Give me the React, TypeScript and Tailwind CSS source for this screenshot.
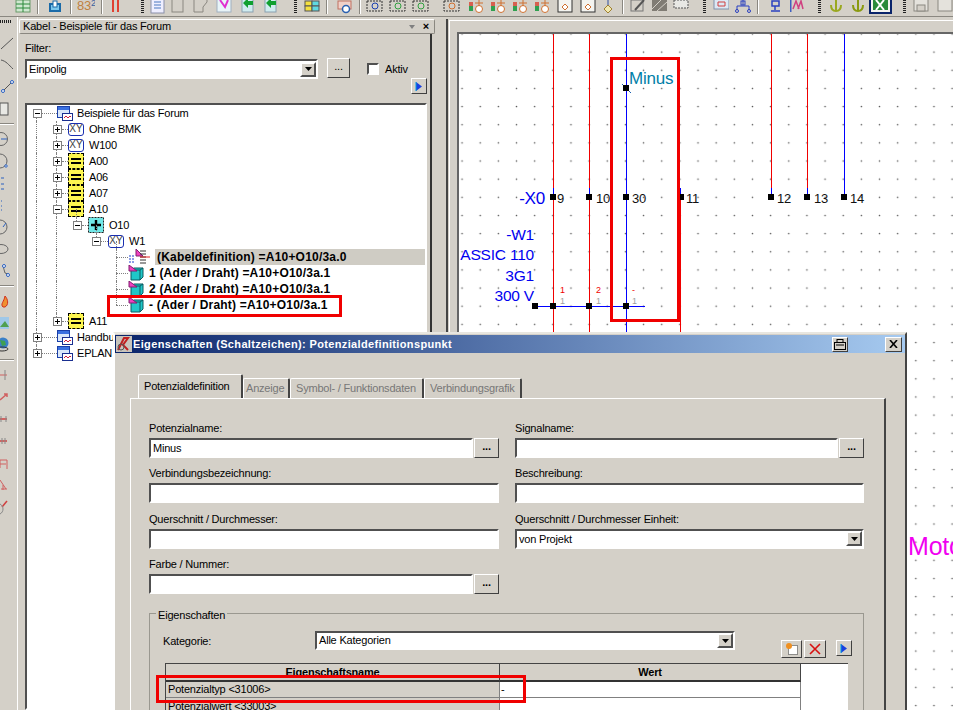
import type { ReactNode } from 'react'

const FONT = "font-['Liberation_Sans',Arial,sans-serif]"
const sunken = 'border-2 border-t-[#505050] border-l-[#505050] border-r-white border-b-white bg-white'
const raised = 'border border-t-white border-l-white border-r-[#404040] border-b-[#404040] bg-[#d4d0c8]'

// ---------- top toolbar ----------
function Tb({ w = 16, className = '', children }: { w?: number; className?: string; children: ReactNode }) {
  return (
    <svg width={w} height={15} viewBox={`0 0 ${w} 15`} className={`shrink-0 ${className}`}>
      {children}
    </svg>
  )
}

const Doc = () => <><rect x="1" y="-3" width="13" height="16" fill="#eef" stroke="#8a8fa8" /><path d="M4 2h7M4 5h7M4 8h7" stroke="#4a78c0" /></>
const Blank = () => <rect x="1" y="-3" width="11" height="15" fill="#d4d0c8" stroke="#8a8780" />
const Tag = () => <path d="M2-2v14h9V7l4-5V-2" fill="#d4d0c8" stroke="#8a8780" />
const Mag = () => <><rect x="1" y="-2" width="14" height="14" fill="#e8f4f8" stroke="#a0b0c0" /><path d="M4 0l5 7 3-7" fill="none" stroke="#e030d0" strokeWidth="2" /></>
const GreenDoc = () => <><rect x="1" y="-2" width="11" height="14" fill="#d0ecf0" stroke="#8aa0b0" /><path d="M2 3l5-5v3h5v4H7v3z" fill="#10a030" /></>
const Dash = ({ c = '#1a3fb0' }: { c?: string }) => <><rect x="1" y="1" width="15" height="10" fill="none" stroke="#333" strokeDasharray="2 1" /><circle cx="9" cy="6" r="3" fill="none" stroke={c} /></>
const Sw = () => <><rect x="1" y="2" width="4" height="9" fill="#d86050" /><rect x="1" y="6" width="4" height="5" fill="#30a050" /><circle cx="11" cy="9" r="3.5" fill="#fff" stroke="#d07030" /><path d="M11 0v6M7 3h8" stroke="#d07030" /></>
const Box = () => <><rect x="1" y="-2" width="14" height="14" fill="#f4f4f0" stroke="#333" /><path d="M8 4l3 3-3 3-3-3z" fill="#fff" stroke="#d07030" /></>
const Hatch = () => <><rect x="1" y="0" width="15" height="11" fill="#807c74" /><path d="M1 9l9-9M6 11l10-9" stroke="#d4d0c8" /></>
const Anchor = ({ c = '#9aa820' }: { c?: string }) => <path d="M8 0v10M3 5c0 4 2 6 5 6s5-2 5-6" fill="none" stroke={c} strokeWidth="2" />

function Sep({ className = '' }: { className?: string }) {
  return <div className={`h-[14px] w-[2px] shrink-0 border-l border-l-[#8a8780] border-r border-r-white ${className}`} />
}
function Grip({ className = '' }: { className?: string }) {
  return <div className={`h-[14px] w-[3px] shrink-0 bg-[repeating-linear-gradient(#222_0,#222_1px,#d4d0c8_1px,#d4d0c8_2px)] ${className}`} />
}

function TopToolbar() {
  return (
    <div className="flex h-[17px] shrink-0 items-start border-b border-b-[#8a8780] pl-[15px] overflow-hidden">
      <Tb><rect x="1" y="0" width="14" height="12" fill="#cfe8d0" stroke="#6a9a6a" /><path d="M1 4h14M1 8h14M8 0v12" stroke="#2a8a3a" /></Tb>
      <Sep className="ml-[6px]" />
      <Tb className="ml-[9px]" w={14}><path d="M2 4h10v7H2z" fill="#7ac8ee" stroke="#1a6aa8" strokeWidth="2" /><rect x="5" y="1" width="4" height="6" fill="#fff" stroke="#1a6aa8" /></Tb>
      <Sep className="ml-[8px]" />
      <div className="ml-[5px] h-[15px] w-[18px] overflow-hidden text-[13px] leading-[11px] text-[#c08040]">83<sup className="text-[#3a60a0] text-[9px]">2</sup></div>
      <Sep className="ml-[6px]" />
      <Tb className="ml-[8px]" w={10}><path d="M2 0v12M7 0v12" stroke="#e04030" strokeWidth="2" /></Tb>
      <Grip className="ml-[20px]" />
      <Tb className="ml-[6px]"><Doc /></Tb>
      <Tb className="ml-[5px]" w={14}><Blank /></Tb>
      <Tb className="ml-[7px]"><Tag /></Tb>
      <Tb className="ml-[8px]"><Mag /></Tb>
      <Tb className="ml-[9px]" w={14}><GreenDoc /></Tb>
      <Tb className="ml-[9px]" w={14}><GreenDoc /></Tb>
      <Grip className="ml-[16px]" />
      <Tb className="ml-[7px]"><rect x="1" y="1" width="7" height="5" fill="#f4e040" stroke="#555" /><rect x="8" y="1" width="7" height="5" fill="#60d8e0" stroke="#555" /><rect x="1" y="6" width="7" height="5" fill="#f4e040" stroke="#555" /><rect x="8" y="6" width="7" height="5" fill="#60d8e0" stroke="#555" /></Tb>
      <Sep className="ml-[6px]" />
      <Tb className="ml-[9px]"><rect x="1" y="1" width="13" height="8" fill="#f0d0c8" stroke="#c07060" /><circle cx="9" cy="9" r="3.5" fill="#fff" stroke="#2a60b0" strokeWidth="1.5" /></Tb>
      <Sep className="ml-[6px]" />
      <Tb className="ml-[5px]" w={17}><Dash /></Tb>
      <Tb className="ml-[6px]" w={17}><Dash c="#30a040" /></Tb>
      <Tb className="ml-[6px]" w={17}><Dash c="#30a040" /></Tb>
      <Tb className="ml-[14px]" w={17}><Dash c="#d07030" /></Tb>
      <Tb className="ml-[8px]"><Sw /></Tb>
      <Tb className="ml-[6px]"><Sw /></Tb>
      <Tb className="ml-[6px]"><Sw /></Tb>
      <Tb className="ml-[6px]"><Sw /></Tb>
      <Tb className="ml-[7px]"><Box /></Tb>
      <Tb className="ml-[7px]"><Box /></Tb>
      <Tb className="ml-[6px]" w={12}><path d="M6 0v5" stroke="#3050a0" /><path d="M6 5l4 4-4 4-4-4z" fill="#f0e8b0" stroke="#a08030" /></Tb>
      <Sep className="ml-[8px]" />
      <Tb className="ml-[6px]"><rect x="1" y="0" width="12" height="11" fill="#d4d0c8" stroke="#777" /><path d="M5 10l9-10" stroke="#555" strokeWidth="2" /></Tb>
      <Tb className="ml-[5px]"><Hatch /></Tb>
      <Tb className="ml-[6px]"><rect x="1" y="0" width="14" height="8" fill="#e8e8e4" stroke="#555" strokeDasharray="2 1" /></Tb>
      <Grip className="ml-[14px]" />
      <Tb className="ml-[7px]"><rect x="1" y="-2" width="15" height="11" fill="#dce8f4" stroke="#8090a8" /><path d="M5 2h7v4H5z" fill="none" stroke="#d04040" /></Tb>
      <Tb className="ml-[6px]"><path d="M8 0v5M2 6h12M2 6v4M14 6v4" fill="none" stroke="#2a40c0" /><rect x="6" y="1" width="4" height="4" fill="none" stroke="#2a40c0" /><circle cx="2" cy="11" r="1.5" fill="none" stroke="#2a40c0" /><circle cx="14" cy="11" r="1.5" fill="none" stroke="#2a40c0" /></Tb>
      <Sep className="ml-[6px]" />
      <Tb className="ml-[10px]" w={12}><path d="M3 1h7v5H3zM6 6v4M2 11h9" fill="none" stroke="#2a40c0" strokeWidth="1.5" /></Tb>
      <Tb className="ml-[8px]"><rect x="1" y="0" width="1.5" height="12" fill="#4060c0" /><path d="M4 9l3-8 3 8M9 9l3-8 2 8" fill="none" stroke="#d04080" strokeWidth="1.5" /></Tb>
      <Grip className="ml-[13px]" />
      <Tb className="ml-[7px]"><Anchor /></Tb>
      <Tb className="ml-[6px]"><Anchor c="#8a9a10" /></Tb>
      <div className="ml-[3px] h-[14px] w-[23px] shrink-0 border-2 border-[#0a246a] border-t-0 bg-[#f4f4f0] flex justify-center overflow-hidden">
        <svg width="15" height="11" viewBox="0 0 15 11"><rect x="0" y="0" width="15" height="10" fill="#2a8a3a" /><path d="M3 0l8 10M11 0l-8 10" stroke="#fff" strokeWidth="2" /></svg>
      </div>
      <Grip className="ml-[11px]" />
      <Tb className="ml-[7px]"><rect x="1" y="-2" width="14" height="13" fill="#e4e2dc" stroke="#8a8780" /><rect x="4" y="5" width="8" height="6" fill="#d4d0c8" stroke="#8a8780" /></Tb>
      <Tb className="ml-[8px]"><rect x="1" y="-2" width="14" height="13" fill="#e4e2dc" stroke="#8a8780" /></Tb>
    </div>
  )
}

// ---------- left toolbar ----------
const leftIcons: ReactNode[] = [
  <path d="M1 14L13 3" stroke="#555" />,
  <path d="M1 3c5 1 8 5 12 9" fill="none" stroke="#555" />,
  <><path d="M2 13l10-10" stroke="#555" /><circle cx="12" cy="3" r="1.5" fill="#fff" stroke="#2a60c0" /><circle cx="3" cy="12" r="1.5" fill="#fff" stroke="#2a60c0" /></>,
  <rect x="0" y="2" width="8" height="12" fill="#e8e8e4" stroke="#555" />,
  null,
  <><circle cx="1" cy="8" r="6.5" fill="none" stroke="#666" /><path d="M1 8h6" stroke="#2a60c0" /></>,
  <><circle cx="0" cy="8" r="7" fill="none" stroke="#666" /><circle cx="6" cy="13" r="1.2" fill="#fff" stroke="#2a60c0" /></>,
  <path d="M1 3h3M1 9h3M1 14h3" stroke="#2a60c0" />,
  <path d="M1 4h2M1 9h2M1 13h2" stroke="#2a60c0" strokeDasharray="1 1" />,
  <><circle cx="0" cy="8" r="7" fill="none" stroke="#666" /><path d="M3 8l3-4" stroke="#2a60c0" /></>,
  <ellipse cx="1" cy="8" rx="7" ry="4.5" fill="none" stroke="#666" />,
  <><path d="M3 3l2 7 3 1" fill="none" stroke="#666" /><circle cx="4" cy="3" r="1.5" fill="#fff" stroke="#2a60c0" /><circle cx="8" cy="12" r="1.5" fill="#fff" stroke="#2a60c0" /></>,
  null,
  <path d="M3 14c-3-3 1-5 2-11 3 3 4 9 0 11z" fill="#f09030" stroke="#d03020" />,
  <><rect x="0" y="2" width="9" height="12" fill="#a0c8e8" /><path d="M0 12l5-6 4 6z" fill="#50a050" /></>,
  <><circle cx="3" cy="6" r="5.5" fill="#3a80c8" /><path d="M0 3l5 1 1 4-4 1z" fill="#40a050" /><ellipse cx="2" cy="12" rx="6" ry="2" fill="none" stroke="#333" /></>,
  null,
  <><path d="M0 8h7" stroke="#d06060" /><path d="M5 3v10" stroke="#888" /></>,
  <path d="M0 11l7-6M4 5h3v3" fill="none" stroke="#d06060" strokeWidth="1.5" />,
  <><path d="M0 8h7" stroke="#d04040" strokeWidth="1.5" /><path d="M1 5v6M6 5v6" stroke="#888" /></>,
  <><path d="M0 8h7" stroke="#d04040" strokeWidth="1.5" /><path d="M2 5v6M5 5v6" stroke="#888" /></>,
  <path d="M0 5h7v9M0 5v8M0 9h6" fill="none" stroke="#d06060" />,
  <path d="M0 3l6 9M1 12h6M3 8v5" fill="none" stroke="#d06060" />,
  <><path d="M7 2L2 8" stroke="#d04040" strokeWidth="1.5" /><path d="M0 5c4 2 4 8 0 10" fill="none" stroke="#888" /></>,
]

function LeftToolbar() {
  return (
    <div className="flex w-[18px] shrink-0 flex-col overflow-hidden pt-[3px] border-r border-r-white">
      <div className="h-[3px] w-[11px] shrink-0 bg-[repeating-linear-gradient(90deg,#222_0,#222_1px,#d4d0c8_1px,#d4d0c8_2px)]" />
      <div className="mt-[9px] flex flex-col">
        {leftIcons.map((icon, i) =>
          icon === null ? (
            <div key={i} className="my-[3px] h-[2px] w-[14px] border-t border-t-[#8a8780] border-b border-b-white" />
          ) : (
            <svg key={i} width="15" height="22" viewBox="0 -3 15 22" className="shrink-0">{icon}</svg>
          ),
        )}
      </div>
    </div>
  )
}

// ---------- tree ----------
const WinIcon = () => (
  <svg width="16" height="16" viewBox="0 0 16 16" className="shrink-0">
    <rect x="0.5" y="1.5" width="12" height="11" fill="#dbe8fa" stroke="#1a3fa8" />
    <rect x="1" y="2" width="11" height="3" fill="#3a70e0" />
    <rect x="5.5" y="8.5" width="10" height="7" fill="#fff" stroke="#1a2f90" />
    <path d="M7 13l2-2 2 2 2-2 1 1" fill="none" stroke="#d02040" />
  </svg>
)
const XYIcon = () => (
  <div className="flex h-[13px] w-[16px] shrink-0 items-center justify-center rounded-[3px] border border-[#1a2fb0] text-[10px] leading-none tracking-normal text-[#444]">XY</div>
)
const EqIcon = () => (
  <div className="flex h-[16px] w-[16px] shrink-0 flex-col items-center justify-center gap-[2px] border border-dashed border-black bg-[#fdf650]">
    <div className="h-[2px] w-[10px] bg-black" />
    <div className="h-[2px] w-[10px] bg-black" />
  </div>
)
const PlusIcon = () => (
  <svg width="16" height="16" viewBox="0 0 16 16" className="shrink-0">
    <rect x="0.5" y="0.5" width="15" height="15" fill="#70e8e8" stroke="#222" strokeDasharray="2 1" />
    <path d="M8 3v10M3 8h10" stroke="#000" strokeWidth="2.4" />
  </svg>
)
const WireIcon = () => (
  <svg width="16" height="16" viewBox="0 0 16 16" className="shrink-0">
    <path d="M3 5l3-2h9v9l-3 3H3z" fill="#20c8c8" stroke="#0a5a60" />
    <path d="M3 5h9v10M12 5l3-2" fill="none" stroke="#0a5a60" />
    <path d="M1 0l8 6H1z" fill="#f040c0" stroke="#802070" />
  </svg>
)
const CableIcon = () => (
  <svg width="22" height="16" viewBox="0 0 22 16" className="shrink-0">
    <path d="M1 7h6M1 10h6M1 13h5" stroke="#1a3fd0" strokeDasharray="2 1" />
    <path d="M8 0l7 7H8z" fill="#f040c0" stroke="#802070" />
    <path d="M13 1v14M15 1v14M17 1v14" stroke="#333" strokeDasharray="2 1" />
    <path d="M12 8h10" stroke="#e02020" />
  </svg>
)

const guideX = { a: 'left-[7px]', b: 'left-[27px]', c: 'left-[47px]', d: 'left-[67px]', e: 'left-[87px]' }
const guidePart = { f: 'top-0 bottom-0', t: 'top-0 h-[8px]', l: 'top-[8px] bottom-0' }
type Guide = [keyof typeof guideX, keyof typeof guidePart]

type Row = {
  pad: string
  box?: '+' | '-'
  conn: string
  icon: ReactNode
  gap: string
  text: string
  bold?: boolean
  hl?: boolean
  guides: Guide[]
}

const L0 = { pad: 'pl-[4px]', conn: 'w-[15px]', gap: 'ml-[4px]' }
const L1 = { pad: 'pl-[24px]', conn: 'w-[6px]', gap: 'ml-[5px]' }
const L2 = { pad: 'pl-[44px]', conn: 'w-[6px]', gap: 'ml-[5px]' }
const L3 = { pad: 'pl-[63px]', conn: 'w-[7px]', gap: 'ml-[5px]' }
const L4 = { pad: 'pl-[87px]', conn: 'w-[12px]', gap: 'ml-[5px]' }

const rows: Row[] = [
  { ...L0, box: '-', icon: <WinIcon />, text: 'Beispiele für das Forum', guides: [['a', 'l']] },
  { ...L1, box: '+', icon: <XYIcon />, text: 'Ohne BMK', guides: [['a', 'f'], ['b', 'f']] },
  { ...L1, box: '+', icon: <XYIcon />, text: 'W100', guides: [['a', 'f'], ['b', 'f']] },
  { ...L1, box: '+', icon: <EqIcon />, text: 'A00', guides: [['a', 'f'], ['b', 'f']] },
  { ...L1, box: '+', icon: <EqIcon />, text: 'A06', guides: [['a', 'f'], ['b', 'f']] },
  { ...L1, box: '+', icon: <EqIcon />, text: 'A07', guides: [['a', 'f'], ['b', 'f']] },
  { ...L1, box: '-', icon: <EqIcon />, text: 'A10', guides: [['a', 'f'], ['b', 'f'], ['c', 'l']] },
  { ...L2, box: '-', icon: <PlusIcon />, text: 'O10', guides: [['a', 'f'], ['b', 'f'], ['c', 't'], ['d', 'l']] },
  { ...L3, box: '-', icon: <XYIcon />, text: 'W1', guides: [['a', 'f'], ['b', 'f'], ['d', 't'], ['e', 'l']] },
  { ...L4, icon: <CableIcon />, text: '(Kabeldefinition) =A10+O10/3a.0', bold: true, hl: true, guides: [['a', 'f'], ['b', 'f'], ['e', 'f']] },
  { ...L4, icon: <WireIcon />, text: '1 (Ader / Draht) =A10+O10/3a.1', bold: true, guides: [['a', 'f'], ['b', 'f'], ['e', 'f']] },
  { ...L4, icon: <WireIcon />, text: '2 (Ader / Draht) =A10+O10/3a.1', bold: true, guides: [['a', 'f'], ['b', 'f'], ['e', 'f']] },
  { ...L4, icon: <WireIcon />, text: '- (Ader / Draht) =A10+O10/3a.1', bold: true, guides: [['a', 'f'], ['b', 'f'], ['e', 't']] },
  { ...L1, box: '+', icon: <EqIcon />, text: 'A11', guides: [['a', 'f'], ['b', 't']] },
  { ...L0, box: '+', icon: <WinIcon />, text: 'Handbuch', guides: [['a', 'f']] },
  { ...L0, box: '+', icon: <WinIcon />, text: 'EPLAN', guides: [['a', 't']] },
]

function TreeRow({ row }: { row: Row }) {
  return (
    <div className={`relative flex h-[16px] items-center whitespace-nowrap ${row.pad}`}>
      {row.guides.map(([x, part]) => (
        <span key={x + part} className={`absolute w-0 border-l border-dotted border-l-[#808080] ${guideX[x]} ${guidePart[part]}`} />
      ))}
      {row.box && (
        <span className="relative flex h-[9px] w-[9px] shrink-0 items-center justify-center border border-[#808080] bg-white">
          <span className="h-px w-[5px] bg-black" />
          {row.box === '+' && <span className="absolute h-[5px] w-px bg-black" />}
        </span>
      )}
      <span className={`h-0 shrink-0 border-t border-dotted border-t-[#808080] ${row.conn}`} />
      {row.icon}
      <span className={`${row.gap} ${row.bold ? 'text-[12px] font-bold tracking-[0.2px]' : ''} ${row.hl ? 'flex h-[16px] w-[270px] items-center bg-[#cfccc4] pl-[2px]' : ''}`}>{row.text}</span>
    </div>
  )
}

function DotsButton({ className = '' }: { className?: string }) {
  return (
    <div className={`flex h-[20px] w-[25px] shrink-0 items-center justify-center pb-[4px] font-bold ${raised} ${className}`}>...</div>
  )
}

function Arrow() {
  return (
    <div className={`flex h-[16px] w-[16px] shrink-0 items-center justify-center ${raised}`}>
      <svg width="8" height="9" viewBox="0 0 8 9"><path d="M1 0l6 4.5L1 9z" fill="#1a40e0" /><path d="M1 0v9" stroke="#00a0e0" /></svg>
    </div>
  )
}

function Combo({ text, className = '' }: { text: string; className?: string }) {
  return (
    <div className={`flex items-center justify-between pl-[2px] ${sunken} ${className}`}>
      <span>{text}</span>
      <div className={`flex h-[15px] w-[16px] items-center justify-center border-2 border-t-white border-l-white border-r-[#505050] border-b-[#505050] bg-[#d4d0c8]`}>
        <svg width="7" height="4" viewBox="0 0 7 4"><path d="M0 0h7L3.5 4z" fill="#000" /></svg>
      </div>
    </div>
  )
}

function Panel() {
  return (
    <div className="flex w-[416px] shrink-0 flex-col pt-[2px]">
      <div className="flex h-[15px] shrink-0 items-center justify-between rounded-[2px] border border-[#8a8780] border-t-white border-l-white pl-[3px] pr-[5px]">
        <span>Kabel - Beispiele für das Forum</span>
        <span className="flex items-center gap-[8px]">
          <svg width="6" height="4" viewBox="0 0 6 4"><path d="M0 0h6L3 4z" fill="#808080" /></svg>
          <span className="text-[11px] font-bold leading-none">×</span>
        </span>
      </div>
      <div className="flex min-h-0 flex-1 flex-col border-r-2 border-r-[#333] mr-[3px] pl-[6px] pr-[2px]">
        <div className="mt-[8px] h-[13px] leading-[13px]">Filter:</div>
        <div className="mt-[4px] flex h-[20px] items-center">
          <Combo text="Einpolig" className="h-[20px] w-[293px]" />
          <div className={`ml-[9px] -mt-[2px] flex h-[20px] w-[23px] items-center justify-center pb-[3px] ${raised}`}>...</div>
          <div className={`ml-[17px] h-[12px] w-[12px] ${sunken} border`} />
          <span className="ml-[6px]">Aktiv</span>
        </div>
        <div className="-mt-px flex justify-end pr-px"><Arrow /></div>
        <div className={`mt-[9px] min-h-0 flex-1 overflow-hidden pl-[2px] mr-[1px] ${sunken}`}>
          {rows.map((r) => <TreeRow key={r.text} row={r} />)}
        </div>
      </div>
    </div>
  )
}

// ---------- schematic ----------
const nodes: [number, number][] = [
  [553, 197], [589, 197], [626, 197], [681, 197], [771, 197], [807, 197], [844, 197],
  [626, 88], [535, 306], [553, 306], [589, 306], [626, 306],
]
const labels: [string, number][] = [
  ['9', 557], ['10', 596], ['30', 632], ['11', 686], ['12', 777], ['13', 814], ['14', 850],
]
const wires: [string, number, number, number][] = [
  ['#f00000', 553.5, 33, 332], ['#f00000', 589.5, 33, 332], ['#0000ff', 626.5, 33, 332], ['#f00000', 680.5, 197, 332],
  ['#f00000', 771.5, 33, 197], ['#f00000', 807.5, 33, 197], ['#0000ff', 844.5, 33, 197],
  ['#0000ff', 553.5, 188, 197], ['#0000ff', 589.5, 188, 197], ['#0000ff', 680.5, 188, 197], ['#0000ff', 771.5, 188, 197], ['#0000ff', 807.5, 188, 197],
]
const sideText: [string, number][] = [['-W1', 240], ['ASSIC 110', 260], ['3G1', 281], ['300 V', 301]]

function Schematic() {
  return (
    <svg width="494" height="676" className="block" fontFamily="'Liberation Sans',Arial,sans-serif">
      <defs>
        <pattern id="dots" patternUnits="userSpaceOnUse" x="453" y="43" width="18.15" height="18.15">
          <circle cx="9.07" cy="9.07" r="0.8" fill="#555" />
        </pattern>
      </defs>
      <g transform="translate(-459 -34)">
        <rect x="459" y="34" width="494" height="676" fill="url(#dots)" />
        {wires.map(([c, x, y1, y2], i) => <line key={i} x1={x} x2={x} y1={y1} y2={y2} stroke={c} />)}
        <line x1="535" x2="645" y1="306.5" y2="306.5" stroke="#0000ff" />
        <line x1="622" x2="631" y1="84" y2="93" stroke="#1a60b0" />
        {nodes.map(([x, y]) => <rect key={`${x}-${y}`} x={x - 3} y={y - 3} width="6" height="6" fill="#000" />)}
        <text x="629" y="84" fontSize="17" fill="#0080a8">Minus</text>
        <text x="545" y="204" fontSize="17" fill="#0000f0" textAnchor="end">-X0</text>
        {sideText.map(([t, y]) => <text key={t} x="534" y={y} fontSize="15.5" fill="#0000f0" textAnchor="end">{t}</text>)}
        {labels.map(([t, x]) => <text key={t} x={x} y="202.5" fontSize="13" fill="#111">{t}</text>)}
        <text x="560" y="293" fontSize="9" fill="#f00000">1</text>
        <text x="596" y="293" fontSize="9" fill="#f00000">2</text>
        <text x="632" y="293" fontSize="9" fill="#f00000">-</text>
        <text x="560" y="304" fontSize="9" fill="#a0a0a0">1</text>
        <text x="596" y="304" fontSize="9" fill="#a0a0a0">1</text>
        <text x="632" y="304" fontSize="9" fill="#a0a0a0">1</text>
        <text x="908" y="555" fontSize="25" fill="#f000f0">Moto</text>
      </g>
    </svg>
  )
}

function CanvasFrame() {
  return (
    <div className="ml-[11px] mt-[2px] flex min-w-0 flex-1 flex-col border-l-2 border-l-[#444] pl-[1px]">
      <div className="mt-px flex min-h-0 flex-1 flex-col border-l border-t border-l-white border-t-white pl-[7px] pt-[11px]">
        <div className="min-h-0 flex-1 overflow-hidden border-l-2 border-t-2 border-l-[#666] border-t-[#666] bg-white">
          <Schematic />
        </div>
      </div>
    </div>
  )
}

// ---------- dialog ----------
function Field({ label, children }: { label: string; children: ReactNode }) {
  return (
    <div>
      <div className="mb-[3px] h-[14px] leading-[14px]">{label}</div>
      {children}
    </div>
  )
}

function Input({ value = '', className = 'w-full' }: { value?: string; className?: string }) {
  return <div className={`flex h-[20px] items-center pl-[2px] ${sunken} ${className}`}>{value}</div>
}

function InputDots({ value, w }: { value?: string; w: string }) {
  return (
    <div className="flex justify-between">
      <Input value={value} className={w} />
      <DotsButton />
    </div>
  )
}

function Dialog() {
  return (
    <div className="absolute left-[113px] top-[332px] h-[378px] w-[794px] overflow-hidden border-2 border-r-[#444] border-t-[#e8e6e0] border-l-white border-b-0 bg-[#d4d0c8]">
      <div className="mt-[1px] flex h-[18px] items-center bg-[linear-gradient(90deg,#0a246a,#a6caf0)] pl-[1px] pr-[3px]">
        <svg width="16" height="16" viewBox="0 0 16 16" className="shrink-0">
          <rect width="16" height="16" fill="#c8c4bc" />
          <path d="M2 14L8 2h4l-5 7 5 5" fill="none" stroke="#c02020" strokeWidth="2" />
          <circle cx="5" cy="11" r="3" fill="none" stroke="#555" />
        </svg>
        <span className="ml-[1px] font-bold tracking-[0.35px] text-white">Eigenschaften (Schaltzeichen): Potenzialdefinitionspunkt</span>
        <div className={`ml-auto flex h-[15px] w-[16px] items-center justify-center ${raised}`}>
          <svg width="12" height="11" viewBox="0 0 12 11"><rect x="3" y="0.5" width="6" height="3" fill="none" stroke="#000" /><rect x="0.5" y="3.5" width="11" height="7" fill="none" stroke="#000" /><path d="M2 6h8" stroke="#000" /></svg>
        </div>
        <div className={`ml-[37px] flex h-[15px] w-[17px] items-center justify-center ${raised}`}>
          <svg width="9" height="8" viewBox="0 0 9 8"><path d="M1 0l7 8M8 0L1 8" stroke="#000" strokeWidth="1.6" /></svg>
        </div>
      </div>

      {/* tabs */}
      <div className="ml-[23px] mt-[21px] flex h-[24px] items-end">
        <div className="flex h-[24px] w-[105px] items-center rounded-t-[2px] border-t border-l border-r-2 border-t-white border-l-white border-r-[#444] pl-[5px]">Potenzialdefinition</div>
        <div className="flex h-[20px] w-[47px] items-center rounded-t-[2px] border-t border-l border-r-2 border-t-white border-l-white border-r-[#444] pl-[2px] text-[#777]">Anzeige</div>
        <div className="flex h-[20px] w-[134px] items-center rounded-t-[2px] border-t border-l border-r-2 border-t-white border-l-white border-r-[#444] pl-[5px] text-[#777]">Symbol- / Funktionsdaten</div>
        <div className="flex h-[20px] w-[98px] items-center rounded-t-[2px] border-t border-l border-r-2 border-t-white border-l-white border-r-[#444] pl-[5px] text-[#777]">Verbindungsgrafik</div>
      </div>

      {/* page */}
      <div className="ml-[15px] h-[320px] w-[756px] border-t border-l border-r-2 border-t-white border-l-white border-r-[#444] pl-[18px] pt-[22px]">
        <div className="grid w-[715px] grid-cols-[350px_349px] gap-x-[16px] gap-y-[8.4px]">
          <Field label="Potenzialname:"><InputDots value="Minus" w="w-[324px]" /></Field>
          <Field label="Signalname:"><InputDots w="w-[323px]" /></Field>
          <Field label="Verbindungsbezeichnung:"><Input /></Field>
          <Field label="Beschreibung:"><Input /></Field>
          <Field label="Querschnitt / Durchmesser:"><Input /></Field>
          <Field label="Querschnitt / Durchmesser Einheit:"><Combo text="von Projekt" className="h-[20px]" /></Field>
          <Field label="Farbe / Nummer:"><InputDots w="w-[324px]" /></Field>
        </div>

        {/* group */}
        <div className="relative mt-[19px] h-[120px] w-[715px] border border-[#9a9890] pl-[15px] pt-[17px]">
          <span className="absolute -top-[7px] left-[6px] bg-[#d4d0c8] px-[2px]">Eigenschaften</span>
          <div className="flex h-[32px] items-start">
            <span className="-ml-[2px] w-[152px] pt-[2px]">Kategorie:</span>
            <Combo text="Alle Kategorien" className="h-[19px] w-[420px]" />
            <div className="ml-[46px] mt-[9px] flex items-start">
              <div className={`flex h-[18px] w-[21px] items-center justify-center ${raised}`}>
                <svg width="14" height="14" viewBox="0 0 14 14"><rect x="3.5" y="3.5" width="9" height="9" fill="#fff" stroke="#333" strokeDasharray="1 1" /><circle cx="4" cy="4" r="3" fill="#f09020" /></svg>
              </div>
              <div className={`ml-[2px] flex h-[18px] w-[22px] items-center justify-center ${raised}`}>
                <svg width="12" height="12" viewBox="0 0 12 12"><path d="M1 1l10 10M11 1L1 11" stroke="#d81010" strokeWidth="1.6" /></svg>
              </div>
              <div className="ml-[10px]"><Arrow /></div>
            </div>
          </div>
          <div className="h-[60px] w-[683px] border-t border-l border-[#444] bg-white">
            <div className="flex h-[18px]">
              <div className="flex w-[334px] items-center justify-center border-r border-b-2 border-r-[#444] border-b-[#333] bg-[#d4d0c8] font-bold">Eigenschaftsname</div>
              <div className="flex w-[301px] items-center justify-center border-r border-b-2 border-r-[#444] border-b-[#333] bg-[#d4d0c8] font-bold">Wert</div>
            </div>
            <div className="flex h-[16px]">
              <div className="flex w-[334px] items-center border-r border-b border-[#808080] bg-[#d4d0c8] pl-[2px]">Potenzialtyp &lt;31006&gt;</div>
              <div className="flex w-[301px] items-center border-r border-b border-[#808080] pl-[1px]">-</div>
            </div>
            <div className="flex h-[16px]">
              <div className="flex w-[334px] items-center border-r border-r-[#808080] bg-[#d4d0c8] pl-[2px]">Potenzialwert &lt;33003&gt;</div>
              <div className="w-[301px] border-r border-r-[#808080]" />
            </div>
          </div>
        </div>
      </div>
    </div>
  )
}

export default function App() {
  return (
    <div className={`relative flex h-[710px] w-[953px] flex-col overflow-hidden bg-[#d4d0c8] text-[11px] tracking-[-0.2px] text-black ${FONT}`}>
      <TopToolbar />
      <div className="flex min-h-0 flex-1">
        <LeftToolbar />
        <div className="ml-[1px] flex min-h-0 flex-1">
          <Panel />
          <CanvasFrame />
        </div>
      </div>
      <Dialog />

      {/* red marks drawn over the screenshot */}
      <div className="absolute left-[610px] top-[57px] h-[265px] w-[70px] border-[3px] border-[#f00000]" />
      <div className="absolute left-[107px] top-[295px] h-[22px] w-[235px] border-[3px] border-[#f00000]" />
      <div className="absolute left-[156px] top-[675px] h-[28px] w-[370px] border-[3px] border-[#f00000]" />
    </div>
  )
}
